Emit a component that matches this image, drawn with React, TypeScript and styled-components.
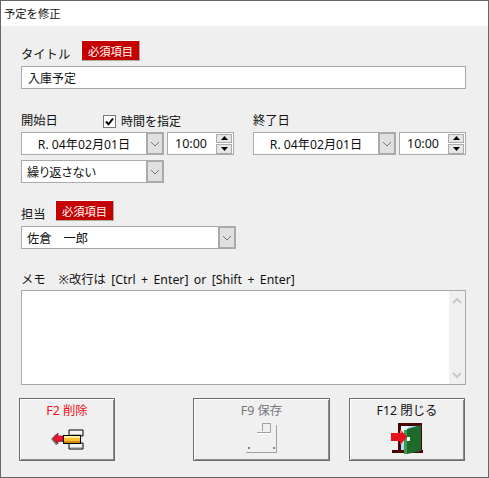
import React from 'react';
import styled, { createGlobalStyle } from 'styled-components';

const GlobalStyle = createGlobalStyle`
  html, body {
    margin: 0;
    padding: 0;
    background: #efefef;
  }
  * {
    box-sizing: border-box;
  }
`;

const Window = styled.div`
  width: 489px;
  height: 478px;
  border: 1px solid #666;
  background: #efefef;
  color: #111;
  font-family: "Noto Sans", "Noto Sans CJK JP", sans-serif;
  font-size: 12px;
  overflow: hidden;
`;

const TitleBar = styled.div`
  height: 25px;
  padding: 0 3px 1px;
  display: flex;
  align-items: center;
  background: #fff;
  font-size: 11.3px;
`;

const Content = styled.div`
  padding: 14px 22px 0 20px;
`;

const BadgeRow = styled.div<{ $labelWidth: number; $top?: number }>`
  display: grid;
  grid-template-columns: ${p => p.$labelWidth}px 59px;
  grid-template-rows: 21px;
  align-items: start;
  height: 21px;
  margin-top: ${p => p.$top ?? 0}px;
`;

const Label = styled.span`
  font-size: 12.3px;
  line-height: 16px;
  white-space: nowrap;
`;

const RaisedLabel = styled(Label)`
  padding-top: 7px;
`;

const Badge = styled.span`
  height: 21px;
  display: flex;
  align-items: center;
  justify-content: center;
  background: #c40000;
  color: #fff;
  font-size: 11.3px;
  border-top: 1px solid #fff;
  border-left: 1px solid #fff;
  border-right: 1px solid #aaa;
  border-bottom: 1px solid #aaa;
`;

const TextField = styled.div`
  height: 23px;
  margin-top: 5px;
  padding: 0 6px;
  display: flex;
  align-items: center;
  background: #fff;
  border: 1px solid #aaa;
  font-size: 12px;
`;

const DateGrid = styled.div`
  margin-top: 23px;
  display: grid;
  grid-template-columns: 213px 213px;
  column-gap: 19px;
`;

const LabelRow = styled.div`
  height: 16px;
  padding-top: 2px;
  display: flex;
  align-items: center;
`;

const DateLabel = styled(Label)`
  width: 82px;
`;

const CheckLabel = styled.label`
  display: flex;
  align-items: center;
  gap: 5px;
  font-size: 12px;
`;

const CheckBox = styled.span`
  width: 13px;
  height: 13px;
  display: flex;
  align-items: center;
  justify-content: center;
  background: #fff;
  border: 1px solid #777;
`;

const FieldRow = styled.div`
  margin-top: 4px;
  display: flex;
  gap: 3px;
`;

const Combo = styled.div<{ $width: number; $top?: number }>`
  width: ${p => p.$width}px;
  height: 23px;
  margin-top: ${p => p.$top ?? 0}px;
  display: flex;
  background: #fff;
  border: 1px solid #aaa;
`;

const ComboText = styled.span<{ $center?: boolean }>`
  flex: 1;
  padding-left: ${p => (p.$center ? 0 : 5)}px;
  display: flex;
  align-items: center;
  justify-content: ${p => (p.$center ? 'center' : 'flex-start')};
  font-size: 12.2px;
  font-feature-settings: "palt";
  white-space: nowrap;
`;

const ComboButton = styled.span`
  width: 18px;
  display: flex;
  align-items: center;
  justify-content: center;
  background: #e0e0e0;
  border: 2px solid #aaa;
  margin: -1px -1px -1px 0;
`;

const Spin = styled.div`
  width: 67px;
  height: 23px;
  padding: 1px 1px 1px 7px;
  display: flex;
  align-items: center;
  justify-content: space-between;
  background: #fff;
  border: 1px solid #aaa;
  font-size: 12.5px;
`;

const SpinButtons = styled.div`
  width: 16px;
  display: flex;
  flex-direction: column;
  gap: 1px;
`;

const SpinButton = styled.span`
  height: 9.5px;
  display: flex;
  align-items: center;
  justify-content: center;
  background: #e6e6e6;
  border: 1px solid #aaa;
`;

const MemoLabel = styled.div`
  margin-top: 21px;
  height: 17px;
  display: flex;
  align-items: center;
  gap: 13px;
  font-size: 12.3px;
`;

const MemoHint = styled.span`
  word-spacing: 2.2px;
  white-space: nowrap;
`;

const MemoBox = styled.div`
  height: 95px;
  margin-top: 3px;
  display: flex;
  justify-content: flex-end;
  background: #fff;
  border: 1px solid #aaa;
`;

const ScrollBar = styled.div`
  width: 16px;
  display: flex;
  flex-direction: column;
  align-items: center;
  justify-content: space-between;
  padding: 6px 0 5px;
  background: #f0f0f0;
`;

const Actions = styled.div`
  margin: 13px 0 0 -2px;
  display: flex;
`;

const ActionButton = styled.button<{ $width: number; $left?: number; $color?: string }>`
  width: ${p => p.$width}px;
  height: 63px;
  margin-left: ${p => p.$left ?? 0}px;
  padding: 3px 0 0;
  display: flex;
  flex-direction: column;
  align-items: center;
  background: #f0f0f0;
  border: 1px solid #6d6d6d;
  box-shadow: inset 1px 1px 0 #fff, inset -1px -1px 0 #8a8a8a;
  color: ${p => p.$color ?? '#111'};
  font-family: inherit;
  font-size: 12.4px;
  line-height: 17px;
`;

const IconSlot = styled.span`
  height: 32px;
  margin-top: 3px;
  display: flex;
  align-items: center;
`;

const Chevron = ({ color = '#777' }: { color?: string }) => (
  <svg width="10" height="6" viewBox="0 0 10 6">
    <path d="M1 1l4 4 4-4" fill="none" stroke={color} strokeWidth="1" />
  </svg>
);

const BoldChevron = ({ up }: { up?: boolean }) => (
  <svg width="10" height="7" viewBox="0 0 10 7">
    <path d={up ? 'M1 6l4-4 4 4' : 'M1 1l4 4 4-4'} fill="none" stroke="#c8c8c8" strokeWidth="2" />
  </svg>
);

const Triangle = ({ up }: { up?: boolean }) => (
  <svg width="7" height="4" viewBox="0 0 7 4">
    <path d={up ? 'M3.5 0L7 4H0z' : 'M0 0h7L3.5 4z'} fill="#000" />
  </svg>
);

const DeleteIcon = () => (
  <svg width="33" height="25" viewBox="0 -3 33 25">
    <path d="M18 1h14v6H18zM18 14h14v6H18z" fill="#f4f4f4" stroke="#000" />
    <path d="M19 5h12v1H19zM19 18h12v1H19z" fill="#bbb" />
    <rect x="12.5" y="6.5" width="17" height="8" fill="#fdc22e" stroke="#000" />
    <rect x="13" y="7" width="16" height="2" fill="#fff0a8" />
    <rect x="13" y="12" width="16" height="2" fill="#d08a10" />
    <path d="M5 5L0 10l5 6h1V13h6V8H6V5z" fill="#777" />
    <path d="M7 4L2 9.5 7 15v-3h5V7H7z" fill="#f01030" stroke="#700" strokeWidth=".5" />
  </svg>
);

const SaveIcon = () => (
  <svg width="32" height="32" viewBox="0 0 32 32">
    <path d="M30.5 3v28M0 30.5h31" fill="none" stroke="#a0a0a0" />
    <path d="M16.5 9V1.5h8v9H11" fill="none" stroke="#a0a0a0" />
    <path d="M11 11.5h14" fill="none" stroke="#fff" />
    <rect x="2" y="25" width="2" height="2" fill="#888" />
    <rect x="27" y="25" width="2" height="2" fill="#888" />
  </svg>
);

const DoorIcon = () => (
  <svg width="33" height="32" viewBox="0 0 33 32">
    <path d="M7 1h24v28h-3V4H10v25H7z" fill="#4a0508" />
    <rect x="10" y="4" width="18" height="24" fill="#a8dcf8" />
    <path d="M10 4h8l-8 12z" fill="#e8f8ff" />
    <rect x="1" y="28" width="31" height="3" fill="#4a0508" />
    <path d="M13 8l3 0v24l-3 0z" fill="#3f9c4e" />
    <path d="M16 7L30 3v26l-14 3z" fill="#1d6a2c" />
    <rect x="16" y="15" width="3" height="4" fill="#fff" />
    <path d="M9 7l7 8-7 8v-4H0v-8h9z" fill="#e8101c" />
    <path d="M0 11h9V8l2 2v1H0z" fill="#ff6a6a" />
  </svg>
);

const ComboField = ({ text, width, center, top }: { text: string; width: number; center?: boolean; top?: number }) => (
  <Combo $width={width} $top={top}>
    <ComboText $center={center}>{text}</ComboText>
    <ComboButton>
      <Chevron />
    </ComboButton>
  </Combo>
);

const TimeField = () => (
  <Spin>
    10:00
    <SpinButtons>
      <SpinButton>
        <Triangle up />
      </SpinButton>
      <SpinButton>
        <Triangle />
      </SpinButton>
    </SpinButtons>
  </Spin>
);

export default function App() {
  return (
    <Window>
      <GlobalStyle />
      <TitleBar>予定を修正</TitleBar>
      <Content>
        <BadgeRow $labelWidth={60}>
          <RaisedLabel>タイトル</RaisedLabel>
          <Badge>必須項目</Badge>
        </BadgeRow>
        <TextField>入庫予定</TextField>

        <DateGrid>
          <div>
            <LabelRow>
              <DateLabel>開始日</DateLabel>
              <CheckLabel>
                <CheckBox>
                  <svg width="9" height="9" viewBox="0 0 9 9">
                    <path d="M1 4.5l2.5 2.8L8 1.5" fill="none" stroke="#000" strokeWidth="2" />
                  </svg>
                </CheckBox>
                時間を指定
              </CheckLabel>
            </LabelRow>
            <FieldRow>
              <ComboField text="R. 04年02月01日" width={143} center />
              <TimeField />
            </FieldRow>
            <ComboField text="繰り返さない" width={143} top={5} />
          </div>
          <div>
            <LabelRow>
              <DateLabel>終了日</DateLabel>
            </LabelRow>
            <FieldRow>
              <ComboField text="R. 04年02月01日" width={143} center />
              <TimeField />
            </FieldRow>
          </div>
        </DateGrid>

        <BadgeRow $labelWidth={34} $top={17}>
          <RaisedLabel>担当</RaisedLabel>
          <Badge>必須項目</Badge>
        </BadgeRow>
        <ComboField text="佐倉　一郎" width={215} top={5} />

        <MemoLabel>
          <span>メモ</span>
          <MemoHint>※改行は [Ctrl + Enter] or [Shift + Enter]</MemoHint>
        </MemoLabel>
        <MemoBox>
          <ScrollBar>
            <BoldChevron up />
            <BoldChevron />
          </ScrollBar>
        </MemoBox>

        <Actions>
          <ActionButton $width={96} $color="#f01020">
            F2 削除
            <IconSlot>
              <DeleteIcon />
            </IconSlot>
          </ActionButton>
          <ActionButton $width={137} $left={78} $color="#777">
            F9 保存
            <IconSlot>
              <SaveIcon />
            </IconSlot>
          </ActionButton>
          <ActionButton $width={116} $left={19}>
            F12 閉じる
            <IconSlot>
              <DoorIcon />
            </IconSlot>
          </ActionButton>
        </Actions>
      </Content>
    </Window>
  );
}
